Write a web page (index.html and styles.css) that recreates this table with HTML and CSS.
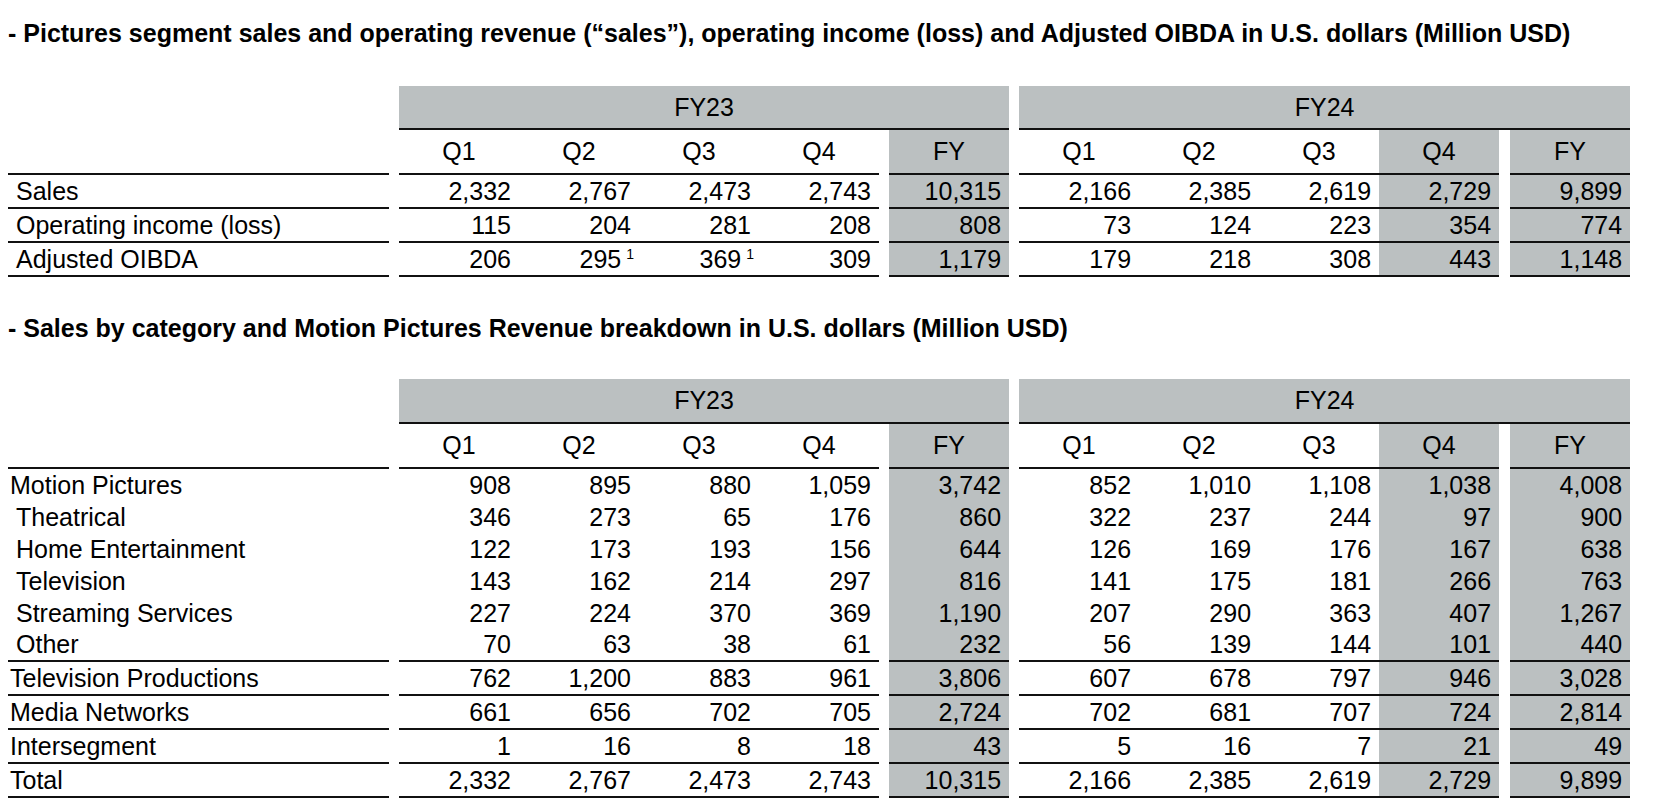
FILE: index.html
```html
<!DOCTYPE html>
<html lang="en">
<head>
<meta charset="utf-8">
<title>Pictures segment</title>
<link rel="stylesheet" href="styles.css">
</head>
<body>
<main class="page">
  <h2 class="title">- Pictures segment sales and operating revenue (“sales”), operating income (loss) and Adjusted OIBDA in U.S. dollars (Million USD)</h2>
  <table class="fin fin-1">
    <colgroup>
      <col class="c-lab"><col class="c-gap">
      <col class="c-q"><col class="c-q"><col class="c-q"><col class="c-q"><col class="c-gap"><col class="c-q c-shade">
      <col class="c-gap">
      <col class="c-q"><col class="c-q"><col class="c-q"><col class="c-q c-shade"><col class="c-gap2"><col class="c-q c-shade">
    </colgroup>
    <tr class="band"><td></td><td class="g"></td><th colspan="6" class="yr">FY23</th><td class="g"></td><th colspan="6" class="yr">FY24</th></tr>
    <tr class="head"><td class="lbl"></td><td class="g"></td><th>Q1</th><th>Q2</th><th>Q3</th><th>Q4</th><td class="g"></td><th>FY</th><td class="g"></td><th>Q1</th><th>Q2</th><th>Q3</th><th>Q4</th><td class="g"></td><th>FY</th></tr>
    <tr class="ln"><td class="lbl sub">Sales</td><td class="g"></td><td>2,332</td><td>2,767</td><td>2,473</td><td>2,743</td><td class="g"></td><td>10,315</td><td class="g"></td><td>2,166</td><td>2,385</td><td>2,619</td><td>2,729</td><td class="g"></td><td>9,899</td></tr>
    <tr class="ln"><td class="lbl sub">Operating income (loss)</td><td class="g"></td><td>115</td><td>204</td><td>281</td><td>208</td><td class="g"></td><td>808</td><td class="g"></td><td>73</td><td>124</td><td>223</td><td>354</td><td class="g"></td><td>774</td></tr>
    <tr class="ln"><td class="lbl sub">Adjusted OIBDA</td><td class="g"></td><td>206</td><td>295<sup class="fn">1</sup></td><td>369<sup class="fn">1</sup></td><td>309</td><td class="g"></td><td>1,179</td><td class="g"></td><td>179</td><td>218</td><td>308</td><td>443</td><td class="g"></td><td>1,148</td></tr>
  </table>

  <h2 class="title title-2">- Sales by category and Motion Pictures Revenue breakdown in U.S. dollars (Million USD)</h2>
  <table class="fin fin-2">
    <colgroup>
      <col class="c-lab"><col class="c-gap">
      <col class="c-q"><col class="c-q"><col class="c-q"><col class="c-q"><col class="c-gap"><col class="c-q c-shade">
      <col class="c-gap">
      <col class="c-q"><col class="c-q"><col class="c-q"><col class="c-q c-shade"><col class="c-gap2"><col class="c-q c-shade">
    </colgroup>
    <tr class="band"><td></td><td class="g"></td><th colspan="6" class="yr">FY23</th><td class="g"></td><th colspan="6" class="yr">FY24</th></tr>
    <tr class="head"><td class="lbl"></td><td class="g"></td><th>Q1</th><th>Q2</th><th>Q3</th><th>Q4</th><td class="g"></td><th>FY</th><td class="g"></td><th>Q1</th><th>Q2</th><th>Q3</th><th>Q4</th><td class="g"></td><th>FY</th></tr>
    <tr class="plain"><td class="lbl">Motion Pictures</td><td class="g"></td><td>908</td><td>895</td><td>880</td><td>1,059</td><td class="g"></td><td>3,742</td><td class="g"></td><td>852</td><td>1,010</td><td>1,108</td><td>1,038</td><td class="g"></td><td>4,008</td></tr>
    <tr class="plain"><td class="lbl sub">Theatrical</td><td class="g"></td><td>346</td><td>273</td><td>65</td><td>176</td><td class="g"></td><td>860</td><td class="g"></td><td>322</td><td>237</td><td>244</td><td>97</td><td class="g"></td><td>900</td></tr>
    <tr class="plain"><td class="lbl sub">Home Entertainment</td><td class="g"></td><td>122</td><td>173</td><td>193</td><td>156</td><td class="g"></td><td>644</td><td class="g"></td><td>126</td><td>169</td><td>176</td><td>167</td><td class="g"></td><td>638</td></tr>
    <tr class="plain"><td class="lbl sub">Television</td><td class="g"></td><td>143</td><td>162</td><td>214</td><td>297</td><td class="g"></td><td>816</td><td class="g"></td><td>141</td><td>175</td><td>181</td><td>266</td><td class="g"></td><td>763</td></tr>
    <tr class="plain"><td class="lbl sub">Streaming Services</td><td class="g"></td><td>227</td><td>224</td><td>370</td><td>369</td><td class="g"></td><td>1,190</td><td class="g"></td><td>207</td><td>290</td><td>363</td><td>407</td><td class="g"></td><td>1,267</td></tr>
    <tr class="ln short"><td class="lbl sub">Other</td><td class="g"></td><td>70</td><td>63</td><td>38</td><td>61</td><td class="g"></td><td>232</td><td class="g"></td><td>56</td><td>139</td><td>144</td><td>101</td><td class="g"></td><td>440</td></tr>
    <tr class="ln"><td class="lbl">Television Productions</td><td class="g"></td><td>762</td><td>1,200</td><td>883</td><td>961</td><td class="g"></td><td>3,806</td><td class="g"></td><td>607</td><td>678</td><td>797</td><td>946</td><td class="g"></td><td>3,028</td></tr>
    <tr class="ln"><td class="lbl">Media Networks</td><td class="g"></td><td>661</td><td>656</td><td>702</td><td>705</td><td class="g"></td><td>2,724</td><td class="g"></td><td>702</td><td>681</td><td>707</td><td>724</td><td class="g"></td><td>2,814</td></tr>
    <tr class="ln"><td class="lbl">Intersegment</td><td class="g"></td><td>1</td><td>16</td><td>8</td><td>18</td><td class="g"></td><td>43</td><td class="g"></td><td>5</td><td>16</td><td>7</td><td>21</td><td class="g"></td><td>49</td></tr>
    <tr class="ln"><td class="lbl">Total</td><td class="g"></td><td>2,332</td><td>2,767</td><td>2,473</td><td>2,743</td><td class="g"></td><td>10,315</td><td class="g"></td><td>2,166</td><td>2,385</td><td>2,619</td><td>2,729</td><td class="g"></td><td>9,899</td></tr>
  </table>
</main>
</body>
</html>
```

FILE: styles.css
```css
html, body {
  margin: 0;
  padding: 0;
  background: #ffffff;
}

body {
  color: #000000;
  font-family: "Liberation Sans", Arial, sans-serif;
}

.page {
  padding: 20px 0 0 8px;
}

.title {
  margin: 0 0 39px 0;
  font-size: 25px;
  font-weight: bold;
  line-height: 27px;
  white-space: nowrap;
}

.title-2 {
  margin-top: 38px;
  margin-bottom: 37px;
}

.fin {
  border-collapse: separate;
  border-spacing: 0;
  table-layout: fixed;
  width: 1622px;
  font-size: 25px;
  line-height: 1;
}

.c-lab { width: 381px; }
.c-gap { width: 10px; }
.c-gap2 { width: 11px; }
.c-q { width: 120px; }
.c-shade { background: #bbc0c1; }

.fin td,
.fin th {
  padding: 0 8px 0 0;
  text-align: right;
  font-weight: normal;
  white-space: nowrap;
  vertical-align: middle;
}

.fin td.g {
  padding: 0;
  background: #ffffff;
}

.fin tr.band { height: 44px; }
.fin tr.band td { background: #ffffff; }
.fin tr.band th.yr {
  background: #bbc0c1;
  text-align: center;
  padding: 0;
  border-bottom: 2px solid #111111;
}

.fin tr.head th {
  text-align: center;
  padding: 0;
}

.fin tr.head td:not(.g),
.fin tr.head th,
.fin tr.ln td:not(.g) {
  border-bottom: 2px solid #111111;
}

.fin-1 tr.head { height: 45px; }
.fin-2 tr.band { height: 45px; }
.fin-2 tr.head { height: 45px; }

.fin tr.ln { height: 34px; }
.fin tr.plain { height: 32px; }
.fin tr.ln.short { height: 33px; }

.fin td.lbl {
  text-align: left;
  padding: 0 0 0 2px;
}

.fin td.lbl.sub {
  padding-left: 8px;
}

.fn {
  font-size: 14px;
  line-height: 0;
  vertical-align: 9px;
  margin-left: 5px;
  margin-right: -3px;
}
```
